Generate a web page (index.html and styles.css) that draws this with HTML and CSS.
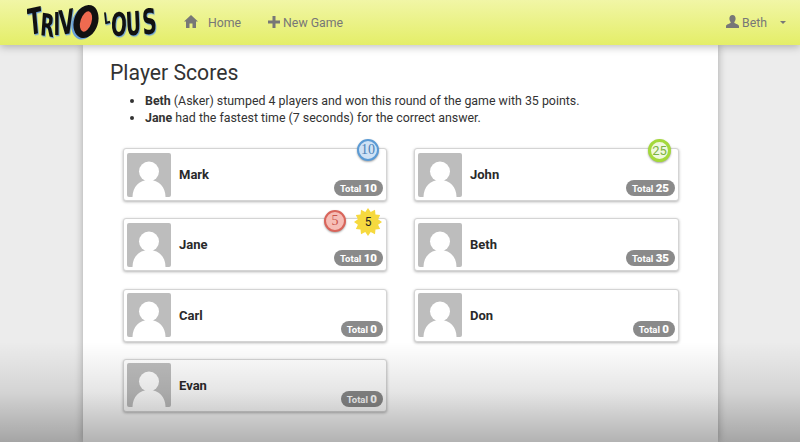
FILE: index.html
```html
<!DOCTYPE html>
<html>

<head>
    <title>Trivolous - Player Scores</title>
    <meta charset="UTF-8">
    <link rel="stylesheet" href="styles.css">
</head>

<body>
    <svg class="defs" width="0" height="0">
        <defs>
            <symbol id="avatar" viewBox="0 0 44 44">
                <circle cx="22" cy="18.5" r="10" fill="#fff" />
                <path d="M5.5 44 C5.5 34 12 27 22 27 C32 27 38.5 34 38.5 44 Z" fill="#fff" />
            </symbol>
        </defs>
    </svg>

    <nav class="navbar">
        <svg class="logo" viewBox="0 0 132 40" width="132" height="40">
            <text class="logo-word" transform="scale(0.8 1.25)" y="26.5" rotate="-8 6 0 -6 0 -10 6 -4 -6">
                <tspan x="2.5" font-size="29">T</tspan><tspan x="16" font-size="25">R</tspan><tspan x="33" font-size="25">I</tspan><tspan x="41" font-size="27">V</tspan><tspan x="62" font-size="20">O</tspan><tspan x="97" y="18" font-size="13">L</tspan><tspan x="104" y="26" font-size="26">O</tspan><tspan x="124" y="27" font-size="26">U</tspan><tspan x="145" y="26.5" font-size="28">S</tspan>
            </text>
            <ellipse cx="57" cy="21" rx="12" ry="17" fill="#6aa0d8" transform="rotate(18 57 21)" />
            <ellipse cx="59" cy="19.5" rx="12" ry="17" fill="#111" transform="rotate(18 59 19.5)" />
            <ellipse cx="59" cy="19.5" rx="5.5" ry="10.5" fill="#ee6a50" transform="rotate(18 59 19.5)" />
        </svg>

        <a class="nav-link nav-home" href="#">
            <svg class="nav-icon" viewBox="0 0 14 13" width="14" height="13">
                <path d="M7 0 L14 6.5 L12 6.5 L12 13 L8.5 13 L8.5 8.5 L5.5 8.5 L5.5 13 L2 13 L2 6.5 L0 6.5 Z" />
            </svg>
            <span>Home</span>
        </a>
        <a class="nav-link nav-new" href="#">
            <svg class="nav-icon" viewBox="0 0 12 12" width="12" height="12">
                <path d="M4.5 0 H7.5 V4.5 H12 V7.5 H7.5 V12 H4.5 V7.5 H0 V4.5 H4.5 Z" />
            </svg>
            <span>New Game</span>
        </a>

        <a class="nav-link nav-user" href="#">
            <svg class="nav-icon" viewBox="0 0 13 13" width="13" height="13">
                <path d="M6.5 0 C8.5 0 9.6 1.5 9.6 3.6 C9.6 5.2 9 6.4 8.2 7.2 C8.2 8.6 12.5 9 13 11 L13 13 L0 13 L0 11 C0.5 9 4.8 8.6 4.8 7.2 C4 6.4 3.4 5.2 3.4 3.6 C3.4 1.5 4.5 0 6.5 0 Z" />
            </svg>
            <span>Beth</span>
            <span class="caret"></span>
        </a>
    </nav>

    <main class="page">
        <h1 class="title">Player Scores</h1>
        <ul class="summary">
            <li><b>Beth</b> (Asker) stumped 4 players and won this round of the game with 35 points.</li>
            <li><b>Jane</b> had the fastest time (7 seconds) for the correct answer.</li>
        </ul>

        <div class="players">
            <div class="player">
                <svg class="avatar"><use href="#avatar" /></svg>
                <div class="player-name">Mark</div>
                <div class="awards"><span class="medal medal-blue">10</span></div>
                <div class="total">Total <b>10</b></div>
            </div>
            <div class="player">
                <svg class="avatar"><use href="#avatar" /></svg>
                <div class="player-name">John</div>
                <div class="awards"><span class="medal medal-green">25</span></div>
                <div class="total">Total <b>25</b></div>
            </div>
            <div class="player">
                <svg class="avatar"><use href="#avatar" /></svg>
                <div class="player-name">Jane</div>
                <div class="awards">
                    <span class="medal medal-red">5</span>
                    <span class="burst">
                        <svg viewBox="-15 -15 30 30" width="28" height="28">
                            <polygon fill="#f6d93f" points="0,-15 2.9,-10.8 7.5,-13 8,-8 13,-7.5 10.8,-2.9 15,0 10.8,2.9 13,7.5 8,8 7.5,13 2.9,10.8 0,15 -2.9,10.8 -7.5,13 -8,8 -13,7.5 -10.8,2.9 -15,0 -10.8,-2.9 -13,-7.5 -8,-8 -7.5,-13 -2.9,-10.8" />
                        </svg>
                        <span class="burst-num">5</span>
                    </span>
                </div>
                <div class="total">Total <b>10</b></div>
            </div>
            <div class="player">
                <svg class="avatar"><use href="#avatar" /></svg>
                <div class="player-name">Beth</div>
                <div class="total">Total <b>35</b></div>
            </div>
            <div class="player">
                <svg class="avatar"><use href="#avatar" /></svg>
                <div class="player-name">Carl</div>
                <div class="total">Total <b>0</b></div>
            </div>
            <div class="player">
                <svg class="avatar"><use href="#avatar" /></svg>
                <div class="player-name">Don</div>
                <div class="total">Total <b>0</b></div>
            </div>
            <div class="player">
                <svg class="avatar"><use href="#avatar" /></svg>
                <div class="player-name">Evan</div>
                <div class="total">Total <b>0</b></div>
            </div>
        </div>
    </main>

    <div class="fade"></div>
</body>

</html>
```

FILE: styles.css
```css
html, body {
    height: 100%;
}

body {
    margin: 0px;
    padding: 0px;
    overflow: hidden;
    background-color: #ececec;
    color: #333;
    font-family: Roboto, "Liberation Sans", sans-serif;
    display: flex;
    flex-direction: column;
}

.defs {
    position: absolute;
}

/* top bar */
.navbar {
    position: relative;
    z-index: 2;
    flex: none;
    display: flex;
    align-items: center;
    height: 45px;
    padding: 0px 14px 0px 27px;
    box-sizing: border-box;
    background: linear-gradient(to bottom, #f1f6a6, #e4ee68);
    box-shadow: 0px 2px 8px rgba(0, 0, 0, 0.25);
}

.logo {
    flex: none;
    margin-top: -1px;
}

.logo-word {
    font-family: "DejaVu Sans Condensed", "DejaVu Sans", sans-serif;
    font-weight: bold;
    fill: #111;
    filter: drop-shadow(1px 1px 0px #6aa0d8);
}

.nav-link {
    display: flex;
    align-items: center;
    color: #777;
    font-size: 12.3px;
    text-decoration: none;
}

.nav-icon {
    fill: #777;
    flex: none;
    margin-top: -2px;
}

.nav-home {
    margin-left: 25px;
}

.nav-home span {
    margin-left: 10px;
}

.nav-new {
    margin-left: 27px;
}

.nav-new span {
    margin-left: 3px;
}

.nav-user {
    margin-left: auto;
}

.nav-user span {
    margin-left: 3px;
}

.nav-user .caret {
    margin-left: 13px;
    width: 0px;
    height: 0px;
    border-top: 3.5px solid #777;
    border-left: 3.5px solid transparent;
    border-right: 3.5px solid transparent;
}

/* white page */
.page {
    flex: 1;
    width: 635px;
    margin-left: 83px;
    padding: 15px 0px 0px 27px;
    box-sizing: border-box;
    background-color: #fff;
    box-shadow: 0px 0px 8px rgba(0, 0, 0, 0.3);
}

.title {
    margin: 0px;
    font-size: 21.2px;
    line-height: 25px;
    font-weight: 400;
    color: #333;
}

.summary {
    margin: 8px 0px 0px 0px;
    padding-left: 35px;
    font-size: 12.4px;
    line-height: 16.5px;
    color: #333;
}

/* score cards */
.players {
    display: grid;
    grid-template-columns: 264px 265px;
    grid-auto-rows: 53px;
    column-gap: 27px;
    row-gap: 17.33px;
    margin: 22px 0px 0px 13px;
}

.player {
    position: relative;
    display: flex;
    align-items: center;
    padding: 0px 3px;
    box-sizing: border-box;
    background-color: #fff;
    border: 1px solid #d4d4d4;
    border-radius: 3px;
    box-shadow: 0px 1px 3px rgba(0, 0, 0, 0.3);
}

.avatar {
    flex: none;
    width: 44px;
    height: 44px;
    background-color: #bdbdbd;
    border-radius: 2px;
}

.player-name {
    margin-left: 8px;
    font-size: 13px;
    font-weight: 700;
    color: #2a2a2a;
}

.total {
    position: absolute;
    right: 3px;
    bottom: 4px;
    padding: 0px 6px;
    height: 16px;
    line-height: 16px;
    border-radius: 8px;
    background-color: #8a8a8a;
    color: #fff;
    font-size: 9.5px;
    font-weight: 700;
}

.total b {
    font-size: 11.5px;
}

.awards {
    position: absolute;
    right: 7px;
    top: -10px;
    display: flex;
    align-items: center;
}

.medal {
    display: block;
    width: 18px;
    height: 18px;
    line-height: 18px;
    text-align: center;
    border-radius: 50%;
    border: 2px solid;
    font-family: "Liberation Serif", serif;
    font-size: 14px;
    box-shadow: 0px 1px 2px rgba(0, 0, 0, 0.35);
}

.medal-blue {
    color: #4c82b8;
    border-color: #5b9bd5;
    background-color: #cfe2f5;
}

.medal-green {
    width: 17px;
    height: 17px;
    line-height: 17px;
    color: #7cb342;
    border: 3px solid #a4d93a;
    background-color: #f0f8dc;
    font-family: Roboto, sans-serif;
    font-size: 13px;
}

.medal-red {
    color: #c9534a;
    border-color: #d9645a;
    background-color: #f6bdb6;
}

.burst {
    position: relative;
    display: block;
    width: 28px;
    height: 28px;
    margin: -1px -3px -3px 8px;
}

.burst-num {
    position: absolute;
    top: 0px;
    left: 0px;
    width: 28px;
    line-height: 28px;
    text-align: center;
    font-size: 12px;
    color: #222;
}

/* grey fade over the bottom of the page */
.fade {
    position: absolute;
    z-index: 3;
    left: 0px;
    right: 0px;
    bottom: 0px;
    height: 100px;
    background: linear-gradient(to bottom, rgba(0, 0, 0, 0), rgba(0, 0, 0, 0.1) 50%, rgba(0, 0, 0, 0.3));
    pointer-events: none;
}
```
